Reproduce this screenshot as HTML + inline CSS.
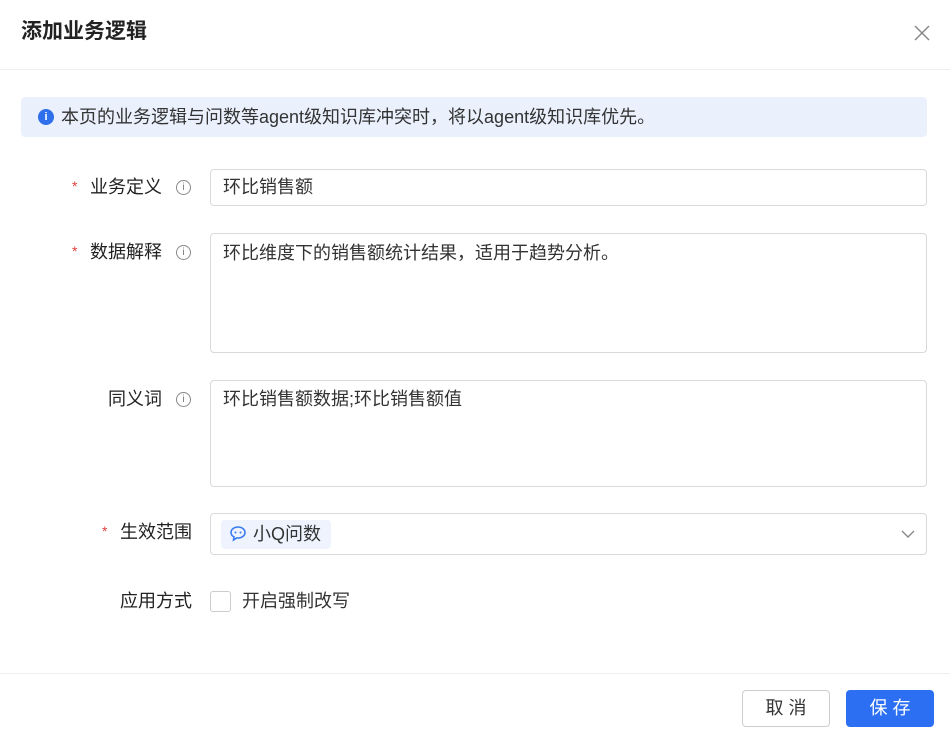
<!DOCTYPE html><html><head><meta charset="utf-8"><style>
*{box-sizing:border-box;margin:0;padding:0}
body{width:950px;height:748px;background:#fff;font-family:"Liberation Sans","Noto Sans CJK SC",sans-serif;color:#333;position:relative;overflow:hidden}
.a{position:absolute;line-height:22px}
.title{left:21px;top:20px;font-size:21px;font-weight:bold;color:#222;line-height:24px}
.hr{left:0;width:950px;height:1px;background:#eee}
.alert{left:21px;top:97px;width:906px;height:40px;background:#eaf1fd;border-radius:4px;font-size:18px;color:#333;line-height:40px;padding-left:40px}
.dot{left:38px;top:109px;width:16px;height:16px;border-radius:50%;background:#2f6fec;color:#fff;font-size:11px;font-weight:bold;text-align:center;line-height:16px}
.lab{font-size:18px;color:#222;text-align:right}
.star{color:#e53e3e;font-size:14px}
.inf{width:15px;height:15px;border:1px solid #888;border-radius:50%;font-size:10px;color:#777;text-align:center;line-height:13px}
.box{left:210px;width:717px;border:1px solid #d9d9d9;border-radius:4px;font-size:18px;color:#333;padding:0 12px}
.btn{height:37px;border-radius:4px;font-size:18px;text-align:center;line-height:35px;letter-spacing:5px;padding-left:5px}
</style></head><body>
<div class="a title">添加业务逻辑</div>
<svg class="a" style="left:913px;top:24px" width="18" height="18"><path d="M2 2L16 16M16 2L2 16" stroke="#888" stroke-width="1.5"/></svg>
<div class="a hr" style="top:69px"></div>
<div class="a alert">本页的业务逻辑与问数等agent级知识库冲突时，将以agent级知识库优先。</div>
<div class="a dot">i</div>

<div class="a star" style="left:72px;top:175px">*</div><div class="a lab" style="left:90px;top:176px">业务定义</div><div class="a inf" style="left:176px;top:180px">i</div>
<div class="a box" style="top:169px;height:37px;line-height:35px">环比销售额</div>

<div class="a star" style="left:72px;top:240px">*</div><div class="a lab" style="left:90px;top:241px">数据解释</div><div class="a inf" style="left:176px;top:245px">i</div>
<div class="a box" style="top:233px;height:120px;padding-top:8px">环比维度下的销售额统计结果，适用于趋势分析。</div>

<div class="a lab" style="left:108px;top:388px">同义词</div><div class="a inf" style="left:176px;top:392px">i</div>
<div class="a box" style="top:380px;height:107px;padding-top:7px">环比销售额数据;环比销售额值</div>

<div class="a star" style="left:102px;top:520px">*</div><div class="a lab" style="left:120px;top:521px">生效范围</div>
<div class="a box" style="top:513px;height:42px;padding:0"></div>
<div class="a" style="left:221px;top:520px;width:110px;height:29px;background:#eef3fe;border-radius:4px;font-size:18px;line-height:29px;padding-left:32px">小Q问数</div>
<svg class="a" style="left:229px;top:525px" width="19" height="18"><path d="M9 2C5 2 2 4.5 2 7.5c0 2 1.2 3.5 3 4.4L4.5 15l3.3-2.1c.4.1.8.1 1.2.1 4 0 7-2.5 7-5.5S13 2 9 2z" fill="none" stroke="#3b7bf0" stroke-width="1.6"/><circle cx="6.5" cy="7.5" r="1" fill="#3b7bf0"/><circle cx="11.5" cy="7.5" r="1" fill="#3b7bf0"/></svg>
<svg class="a" style="left:901px;top:529px" width="14" height="10"><path d="M1 2l6 6 6-6" fill="none" stroke="#888" stroke-width="1.4"/></svg>

<div class="a lab" style="left:120px;top:590px">应用方式</div>
<div class="a" style="left:210px;top:591px;width:21px;height:21px;border:1px solid #ccc;border-radius:3px"></div>
<div class="a" style="left:242px;top:590px;font-size:18px;color:#333">开启强制改写</div>

<div class="a hr" style="top:673px"></div>
<div class="a btn" style="left:742px;top:690px;width:88px;border:1px solid #ccc;color:#333">取消</div>
<div class="a btn" style="left:846px;top:690px;width:88px;background:#2d6ff2;color:#fff;line-height:37px">保存</div>
</body></html>
